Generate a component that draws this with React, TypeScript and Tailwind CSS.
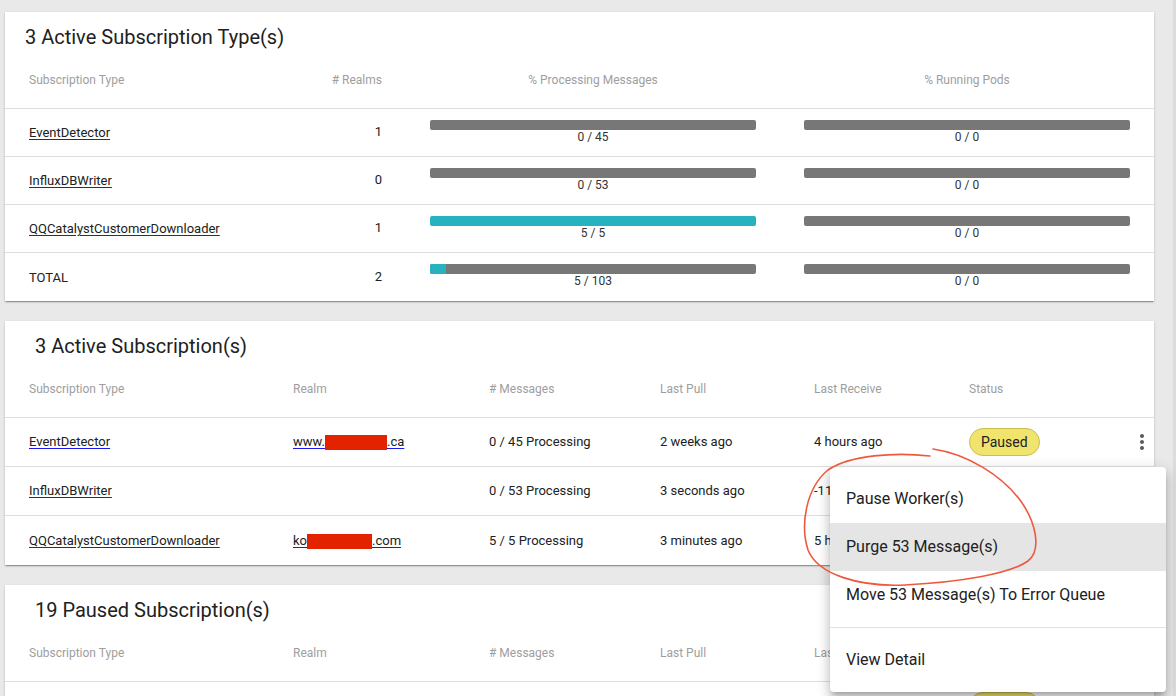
import React from "react";
import { MdMoreVert } from "react-icons/md";

const cardShadow =
  "shadow-[0px_2px_1px_-1px_rgba(0,0,0,0.2),0px_1px_1px_0px_rgba(0,0,0,0.14),0px_1px_3px_0px_rgba(0,0,0,0.12)]";

function Link({ children }: { children: React.ReactNode }) {
  return (
    <a className="text-[13px] text-[#212121] underline decoration-[#1a1aee] underline-offset-[2px] cursor-pointer whitespace-nowrap">
      {children}
    </a>
  );
}

function Bar({ value, total }: { value: number; total: number }) {
  const pct = total > 0 ? (value / total) * 100 : 0;
  return (
    <div className="self-stretch flex flex-col items-stretch px-[24px] pt-[11px]">
      <div className="h-[10px] w-full rounded-[2px] bg-[#777777] overflow-hidden">
        <div className="h-full bg-[#27b2bf]" style={{ width: `${pct}%` }} />
      </div>
      <div className="text-[12px] leading-[14px] text-[#333333] text-center">
        {value} / {total}
      </div>
    </div>
  );
}

function Badge() {
  return (
    <span className="inline-flex items-center h-[28px] px-[11px] rounded-full bg-[#f0e46e] border border-[#cbbf50] text-[14px] text-[#212121]">
      Paused
    </span>
  );
}

function Redact({ w }: { w: string }) {
  return <span className={`inline-block h-[15px] align-middle bg-[#e32200] ${w}`} />;
}

const typeRows = [
  { name: "EventDetector", realms: 1, proc: [0, 45], pods: [0, 0], link: true },
  { name: "InfluxDBWriter", realms: 0, proc: [0, 53], pods: [0, 0], link: true },
  { name: "QQCatalystCustomerDownloader", realms: 1, proc: [5, 5], pods: [0, 0], link: true },
  { name: "TOTAL", realms: 2, proc: [5, 103], pods: [0, 0], link: false },
];

function TypesCard() {
  return (
    <div className={`bg-white ${cardShadow}`}>
      <div className="h-[50px] flex items-center pl-[20px] text-[20px] text-[#212121]">
        3 Active Subscription Type(s)
      </div>
      <div className="grid grid-cols-[295px_106px_374px_374px] h-[47px] border-b border-[#dedede] text-[12px] leading-[16px] text-[#9e9e9e]">
        <div className="pl-[24px] pt-[10px]">Subscription Type</div>
        <div className="pr-[24px] pt-[10px] text-right"># Realms</div>
        <div className="pt-[10px] text-center">% Processing Messages</div>
        <div className="pt-[10px] text-center">% Running Pods</div>
      </div>
      {typeRows.map((r, i) => (
        <div
          key={r.name}
          className={`grid grid-cols-[295px_106px_374px_374px] h-[48px] items-center ${
            i < typeRows.length - 1 ? "border-b border-[#dedede]" : ""
          }`}
        >
          <div className="pl-[24px] -mt-[1px]">
            {r.link ? <Link>{r.name}</Link> : <span className="text-[13px] text-[#212121]">{r.name}</span>}
          </div>
          <div className="pr-[24px] text-right text-[13px] text-[#212121] -mt-[1px]">{r.realms}</div>
          <Bar value={r.proc[0]} total={r.proc[1]} />
          <Bar value={r.pods[0]} total={r.pods[1]} />
        </div>
      ))}
    </div>
  );
}

const subCols = "grid grid-cols-[264px_196px_171px_154px_155px_173px_36px]";

function SubHeader() {
  return (
    <div className={`${subCols} h-[47px] border-b border-[#dedede] text-[12px] leading-[16px] text-[#9e9e9e]`}>
      <div className="pl-[24px] pt-[10px]">Subscription Type</div>
      <div className="pl-[24px] pt-[10px]">Realm</div>
      <div className="pl-[24px] pt-[10px]"># Messages</div>
      <div className="pl-[24px] pt-[10px]">Last Pull</div>
      <div className="pl-[24px] pt-[10px]">Last Receive</div>
      <div className="pl-[24px] pt-[10px]">Status</div>
      <div />
    </div>
  );
}

type SubRow = {
  name: string;
  realm: React.ReactNode;
  msgs: string;
  pull: string;
  receive: string;
};

const activeRows: SubRow[] = [
  {
    name: "EventDetector",
    realm: (
      <Link>
        www.<Redact w="w-[62px]" />.ca
      </Link>
    ),
    msgs: "0 / 45 Processing",
    pull: "2 weeks ago",
    receive: "4 hours ago",
  },
  {
    name: "InfluxDBWriter",
    realm: null,
    msgs: "0 / 53 Processing",
    pull: "3 seconds ago",
    receive: "-11 seconds ago",
  },
  {
    name: "QQCatalystCustomerDownloader",
    realm: (
      <Link>
        ko<Redact w="w-[65px]" />.com
      </Link>
    ),
    msgs: "5 / 5 Processing",
    pull: "3 minutes ago",
    receive: "5 hours ago",
  },
];

function SubRows({ rows, last }: { rows: SubRow[]; last: boolean }) {
  return (
    <>
      {rows.map((r, i) => (
        <div
          key={r.name}
          className={`${subCols} h-[49px] items-center text-[13px] text-[#212121] ${
            i < rows.length - 1 || !last ? "border-b border-[#dedede]" : ""
          }`}
        >
          <div className="pl-[24px]">
            <Link>{r.name}</Link>
          </div>
          <div className="pl-[24px]">{r.realm}</div>
          <div className="pl-[24px] whitespace-nowrap">{r.msgs}</div>
          <div className="pl-[24px] whitespace-nowrap">{r.pull}</div>
          <div className="pl-[24px] whitespace-nowrap">{r.receive}</div>
          <div className="pl-[24px]">
            <Badge />
          </div>
          <div className="flex justify-end">
            <MdMoreVert size={24} className="text-[#5a5a5a]" />
          </div>
        </div>
      ))}
    </>
  );
}

const pausedRows: SubRow[] = [
  {
    name: "AzureBlobWriter",
    realm: null,
    msgs: "0 / 0 Processing",
    pull: "1 hour ago",
    receive: "2 days ago",
  },
  {
    name: "CustomerSync",
    realm: null,
    msgs: "0 / 0 Processing",
    pull: "3 days ago",
    receive: "3 days ago",
  },
];

function SubCard({ title, rows, last }: { title: string; rows: SubRow[]; last: boolean }) {
  return (
    <div className={`bg-white ${cardShadow}`}>
      <div className="h-[50px] flex items-center pl-[30px] text-[20px] text-[#212121]">{title}</div>
      <SubHeader />
      <SubRows rows={rows} last={last} />
    </div>
  );
}

function Menu() {
  return (
    <div className="absolute left-[830px] top-[467px] w-[336px] bg-white rounded-[4px] py-[8px] shadow-[0px_5px_5px_-3px_rgba(0,0,0,0.2),0px_8px_10px_1px_rgba(0,0,0,0.14),0px_3px_14px_2px_rgba(0,0,0,0.12)] text-[16px] text-[#212121]">
      <div className="h-[48px] flex items-center px-[16px]">Pause Worker(s)</div>
      <div className="h-[48px] flex items-center px-[16px] bg-[#e5e5e5]">Purge 53 Message(s)</div>
      <div className="h-[48px] flex items-center px-[16px]">Move 53 Message(s) To Error Queue</div>
      <div className="h-px bg-[#e0e0e0] my-[8px]" />
      <div className="h-[48px] flex items-center px-[16px]">View Detail</div>
    </div>
  );
}

export default function App() {
  return (
    <div className="relative flex w-[1176px] h-[696px] overflow-hidden bg-[#e9e9e9] font-[family-name:Roboto,sans-serif]">
      <div className="w-[1173px] pl-[5px] pr-[19px] pt-[12px] flex flex-col gap-[20px] shrink-0">
        <TypesCard />
        <SubCard title="3 Active Subscription(s)" rows={activeRows} last={true} />
        <SubCard title="19 Paused Subscription(s)" rows={pausedRows} last={false} />
      </div>
      <div className="w-[3px] bg-[#dcdcdc] shrink-0" />
      <Menu />
      <svg
        className="absolute left-0 top-0 pointer-events-none"
        width={1176}
        height={696}
        viewBox="0 0 1176 696"
      >
        <path
          d="M 930 456 C 895 452, 850 455, 828 470 C 806 488, 800 525, 808 550 C 818 575, 860 587, 905 585 C 960 582, 1010 574, 1028 561 C 1042 550, 1036 522, 1020 500 C 1002 476, 968 454, 933 449"
          fill="none"
          stroke="#f0583c"
          strokeWidth={1.6}
          strokeLinecap="round"
        />
      </svg>
    </div>
  );
}
